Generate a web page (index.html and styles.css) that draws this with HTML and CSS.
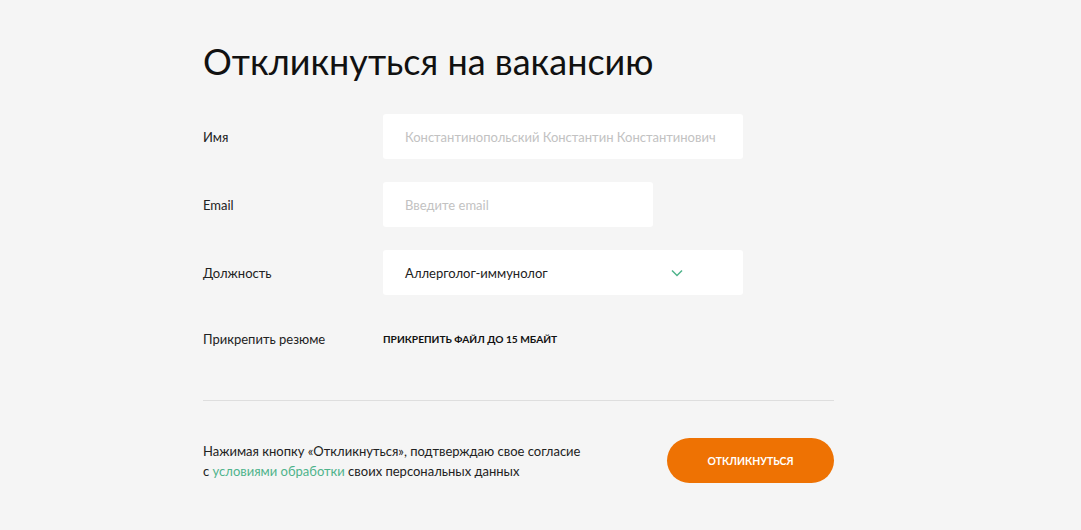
FILE: index.html
```html
<!DOCTYPE html>
<html lang="ru">
<head>
    <meta charset="UTF-8">
    <meta name="viewport" content="width=device-width, initial-scale=1.0">
    <title>Откликнуться на вакансию</title>
    <link rel="stylesheet" href="styles.css">
</head>
<body>
    <div class="container">
        <h1>Откликнуться на вакансию</h1>

        <form class="form">
            <div class="row">
                <label class="label" for="name">Имя</label>
                <input class="field field-wide" type="text" id="name" placeholder="Константинопольский Константин Константинович">
            </div>
            <div class="row">
                <label class="label" for="email">Email</label>
                <input class="field field-short" type="email" id="email" placeholder="Введите email">
            </div>
            <div class="row">
                <label class="label">Должность</label>
                <div class="field field-wide select">
                    <span>Аллерголог-иммунолог</span>
                    <svg class="chevron" width="12" height="8" viewBox="0 0 12 8">
                        <path d="M1 1.5 L6 6.5 L11 1.5" fill="none" stroke="#4fb38b" stroke-width="1.5"/>
                    </svg>
                </div>
            </div>
            <div class="row row-file">
                <span class="label">Прикрепить резюме</span>
                <span class="attach">Прикрепить файл до 15 Мбайт</span>
            </div>

            <div class="footer">
                <p class="agree">
                    Нажимая кнопку «Откликнуться», подтверждаю свое согласие<br>
                    с <a href="#">условиями обработки</a> своих персональных данных
                </p>
                <button type="button" class="submit">Откликнуться</button>
            </div>
        </form>
    </div>
</body>
</html>
```

FILE: styles.css
```css
/* Общие стили */
body {
    margin: 0;
    background-color: #f5f5f5;
    font-family: 'Lato', 'Noto Sans', sans-serif;
    color: #1a1a1a;
}

.container {
    width: 631px;
    padding: 35px 0 0 203px;
}

h1 {
    margin: 0 0 27px;
    font-size: 36px;
    font-weight: 400;
    line-height: 52px;
    color: #111;
}

.row {
    display: flex;
    align-items: center;
    height: 45px;
    margin-bottom: 23px;
}

.label {
    width: 180px;
    font-size: 13px;
    color: #222;
}

.field {
    box-sizing: border-box;
    height: 45px;
    padding: 0 22px;
    border: none;
    border-radius: 3px;
    background-color: #fff;
    font-family: inherit;
    font-size: 13px;
    color: #222;
    outline: none;
}

.field::placeholder {
    color: #c2c2c2;
}

.field-wide {
    width: 360px;
}

.field-short {
    width: 270px;
}

.select {
    display: flex;
    align-items: center;
    justify-content: space-between;
    padding-right: 60px;
}

.row-file {
    height: 42px;
    margin-bottom: 40px;
}

.attach {
    font-size: 10.2px;
    font-weight: 700;
    text-transform: uppercase;
    color: #111;
}

.footer {
    display: flex;
    align-items: center;
    justify-content: space-between;
    border-top: 1px solid #dedede;
    padding-top: 37px;
}

.agree {
    margin: 0;
    font-size: 13px;
    line-height: 20px;
    color: #222;
}

.agree a {
    color: #4fb38b;
    text-decoration: none;
}

.submit {
    width: 167px;
    height: 45px;
    border: none;
    border-radius: 23px;
    background-color: #ee7203;
    color: #fff;
    font-family: inherit;
    font-size: 10.4px;
    font-weight: 700;
    text-transform: uppercase;
    cursor: pointer;
}
```
